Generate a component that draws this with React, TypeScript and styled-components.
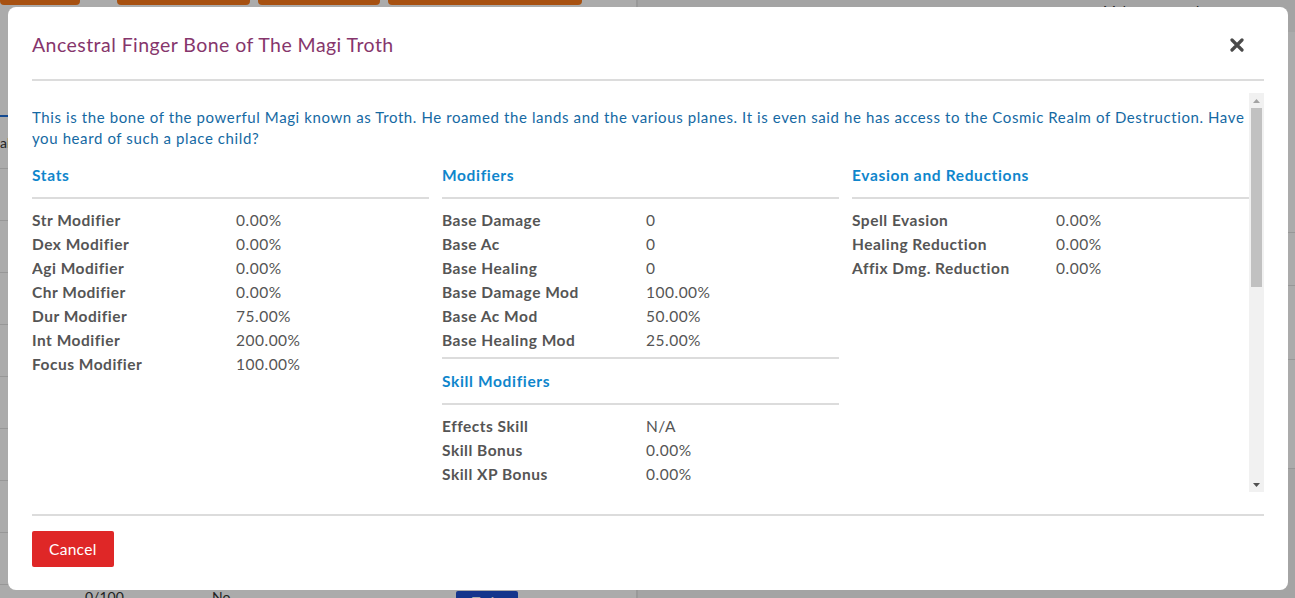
import styled, { createGlobalStyle } from "styled-components";

const GlobalStyle = createGlobalStyle`
  html, body {
    margin: 0;
    padding: 0;
    overflow: hidden;
  }

  body {
    font-family: Lato, "Noto Sans", sans-serif;
    color: #444;
    background: #f5f5f5;
  }
`;

/* ---------- page behind the dialog ---------- */

const Page = styled.div`
  display: grid;
  grid-template-columns: 638px 1fr;
  height: calc(100vh + 31px);
  margin-top: -31px;
  overflow: hidden;
`;

const LeftPane = styled.div`
  display: flex;
  flex-direction: column;
  border-right: 2px solid #e5e5e5;
  background: #fff;
`;

const ActionBar = styled.div`
  display: flex;
  gap: 8px;
`;

const ActionButton = styled.button<{ $width: number; $gapBefore?: number }>`
  width: ${(p) => p.$width}px;
  height: 36px;
  margin-left: ${(p) => p.$gapBefore ?? 0}px;
  border: 0;
  border-radius: 0 0 4px 4px;
  background: #f97a1a;
  color: #fff;
`;

const Tabs = styled.div`
  display: flex;
  margin-top: 80px;
  border-bottom: 2px solid #1e6fd9;
  height: 30px;
`;

const BgRow = styled.div<{ $last?: boolean }>`
  display: grid;
  grid-template-columns: 85px 127px 244px 1fr;
  align-items: ${(p) => (p.$last ? "start" : "center")};
  flex: 0 0 52px;
  box-sizing: border-box;
  padding-top: ${(p) => (p.$last ? "3px" : "0")};
  border-bottom: 1px solid #e2e2e2;
  font-size: 14px;
  color: #333;
`;

const TrainButton = styled.span`
  display: inline-block;
  width: 62px;
  margin-top: 3px;
  padding: 2px 0 8px;
  background: #1f4fd1;
  color: #fff;
  text-align: center;
  border-radius: 2px;
`;

const RightPane = styled.div`
  display: flex;
  flex-direction: column;
  padding: 33px 0 0 20px;
  font-size: 14px;
  color: #333;
`;

const RightText = styled.p`
  margin: 0 0 13px 445px;
  white-space: nowrap;
`;

const RightLine = styled.div<{ $h: number }>`
  flex: 0 0 ${(p) => p.$h}px;
  border-bottom: 1px solid #e2e2e2;
  background: #fff;
`;

/* ---------- dialog ---------- */

const Overlay = styled.div`
  position: fixed;
  inset: 0;
  display: flex;
  padding: 7px 7px 8px 8px;
  background: rgba(0, 0, 0, 0.33);
`;

const Dialog = styled.div`
  flex: 1;
  display: flex;
  flex-direction: column;
  padding: 0 24px;
  background: #fff;
  border-radius: 8px;
`;

const Header = styled.div`
  display: flex;
  align-items: center;
  justify-content: space-between;
  padding: 24px 0 20px;
  border-bottom: 2px solid #dcdcdc;
`;

const Title = styled.h3`
  margin: 0;
  font-size: 19.5px;
  line-height: 28px;
  letter-spacing: 0.45px;
  font-weight: 400;
  color: #86366c;
`;

const CloseButton = styled.button`
  display: flex;
  margin-right: 20px;
  padding: 0;
  border: 0;
  background: none;
  color: #4a4a4a;
  cursor: pointer;
`;

const Body = styled.div`
  padding: 12px 0 22px;
  border-bottom: 2px solid #dcdcdc;
`;

const ScrollFrame = styled.div`
  display: flex;
  height: 399px;
`;

const ScrollViewport = styled.div`
  flex: 1;
  min-width: 0;
  overflow: hidden;
`;

const ScrollTrack = styled.div`
  display: flex;
  flex-direction: column;
  align-items: center;
  width: 15px;
  background: #f1f1f1;
`;

const ScrollArrow = styled.div`
  display: flex;
  align-items: center;
  justify-content: center;
  height: 15px;
  width: 15px;
`;

const ScrollThumb = styled.div<{ $size: number }>`
  width: 11px;
  height: ${(p) => p.$size}px;
  background: #c1c1c1;
`;

const ScrollRest = styled.div`
  flex: 1;
`;

const Description = styled.p`
  margin: 0;
  padding-top: 14px;
  font-size: 15px;
  line-height: 21px;
  letter-spacing: 0.6px;
  color: #1569a3;
`;

const Columns = styled.div`
  display: grid;
  grid-template-columns: repeat(3, 1fr);
  column-gap: 13px;
  margin-top: 16px;
`;

const Column = styled.div`
  display: flex;
  flex-direction: column;
`;

const Heading = styled.h4<{ $first?: boolean }>`
  margin: ${(p) => (p.$first ? "0" : "12px")} 0 12px;
  font-size: 15.5px;
  line-height: 20px;
  letter-spacing: 0.65px;
  font-weight: 700;
  color: #0f86cc;
`;

const Rule = styled.hr<{ $after?: boolean }>`
  margin: ${(p) => (p.$after ? "5px 0 0" : "0 0 9px")};
  border: 0;
  border-top: 2px solid #dcdcdc;
`;

const List = styled.dl`
  display: grid;
  grid-template-columns: 204px 1fr;
  margin: 0;
  font-size: 15.5px;
  line-height: 24px;
  letter-spacing: 0.5px;
  color: #555;
`;

const Label = styled.dt`
  font-weight: 700;
`;

const Value = styled.dd`
  margin: 0;
`;

const Footer = styled.div`
  padding: 15px 0 23px;
`;

const CancelButton = styled.button`
  height: 36px;
  padding: 0 17px;
  border: 0;
  border-radius: 2px;
  background: #df2727;
  color: #fff;
  font-family: inherit;
  font-size: 15.5px;
  letter-spacing: 0.3px;
  cursor: pointer;
`;

type Pair = [string, string];

const stats: Pair[] = [
  ["Str Modifier", "0.00%"],
  ["Dex Modifier", "0.00%"],
  ["Agi Modifier", "0.00%"],
  ["Chr Modifier", "0.00%"],
  ["Dur Modifier", "75.00%"],
  ["Int Modifier", "200.00%"],
  ["Focus Modifier", "100.00%"],
];

const modifiers: Pair[] = [
  ["Base Damage", "0"],
  ["Base Ac", "0"],
  ["Base Healing", "0"],
  ["Base Damage Mod", "100.00%"],
  ["Base Ac Mod", "50.00%"],
  ["Base Healing Mod", "25.00%"],
];

const skillModifiers: Pair[] = [
  ["Effects Skill", "N/A"],
  ["Skill Bonus", "0.00%"],
  ["Skill XP Bonus", "0.00%"],
];

const evasion: Pair[] = [
  ["Spell Evasion", "0.00%"],
  ["Healing Reduction", "0.00%"],
  ["Affix Dmg. Reduction", "0.00%"],
];

function Pairs({ items }: { items: Pair[] }) {
  return (
    <List>
      {items.flatMap(([k, v]) => [
        <Label key={k}>{k}</Label>,
        <Value key={k + "-v"}>{v}</Value>,
      ])}
    </List>
  );
}

function CloseIcon() {
  return (
    <svg width="14" height="14" viewBox="0 0 14 14">
      <path
        d="M2 2 L12 12 M12 2 L2 12"
        stroke="currentColor"
        strokeWidth="3.2"
        strokeLinecap="round"
      />
    </svg>
  );
}

function Arrow({ down }: { down?: boolean }) {
  return (
    <svg width="7" height="4" viewBox="0 0 7 4">
      <path
        d={down ? "M0 0 H7 L3.5 4 Z" : "M0 4 H7 L3.5 0 Z"}
        fill={down ? "#505050" : "#a3a3a3"}
      />
    </svg>
  );
}

function Background() {
  return (
    <Page>
      <LeftPane>
        <ActionBar>
          <ActionButton $width={80}>Train</ActionButton>
          <ActionButton $width={133} $gapBefore={29}>Inventory</ActionButton>
          <ActionButton $width={122}>Equip</ActionButton>
          <ActionButton $width={194}>Quest Items</ActionButton>
        </ActionBar>
        <Tabs />
        <BgRow>
          <span>al</span>
        </BgRow>
        <BgRow />
        <BgRow />
        <BgRow />
        <BgRow />
        <BgRow />
        <BgRow />
        <BgRow />
        <BgRow />
        <BgRow $last>
          <span />
          <span>0/100</span>
          <span>No</span>
          <span>
            <TrainButton>Train</TrainButton>
          </span>
        </BgRow>
      </LeftPane>
      <RightPane>
        <RightText>Make sure you have</RightText>
        <RightLine $h={200} />
        <RightLine $h={52} />
        <RightLine $h={73} />
        <RightLine $h={108} />
      </RightPane>
    </Page>
  );
}

export default function App() {
  return (
    <>
      <GlobalStyle />
      <Background />
      <Overlay>
        <Dialog>
          <Header>
            <Title>Ancestral Finger Bone of The Magi Troth</Title>
            <CloseButton aria-label="Close">
              <CloseIcon />
            </CloseButton>
          </Header>
          <Body>
            <ScrollFrame>
              <ScrollViewport>
                <Description>
                  This is the bone of the powerful Magi known as Troth. He
                  roamed the lands and the various planes. It is even said he
                  has access to the Cosmic Realm of Destruction. Have you heard
                  of such a place child?
                </Description>
                <Columns>
                  <Column>
                    <Heading $first>Stats</Heading>
                    <Rule />
                    <Pairs items={stats} />
                  </Column>
                  <Column>
                    <Heading $first>Modifiers</Heading>
                    <Rule />
                    <Pairs items={modifiers} />
                    <Rule $after />
                    <Heading>Skill Modifiers</Heading>
                    <Rule />
                    <Pairs items={skillModifiers} />
                  </Column>
                  <Column>
                    <Heading $first>Evasion and Reductions</Heading>
                    <Rule />
                    <Pairs items={evasion} />
                  </Column>
                </Columns>
              </ScrollViewport>
              <ScrollTrack>
                <ScrollArrow>
                  <Arrow />
                </ScrollArrow>
                <ScrollThumb $size={179} />
                <ScrollRest />
                <ScrollArrow>
                  <Arrow down />
                </ScrollArrow>
              </ScrollTrack>
            </ScrollFrame>
          </Body>
          <Footer>
            <CancelButton>Cancel</CancelButton>
          </Footer>
        </Dialog>
      </Overlay>
    </>
  );
}
